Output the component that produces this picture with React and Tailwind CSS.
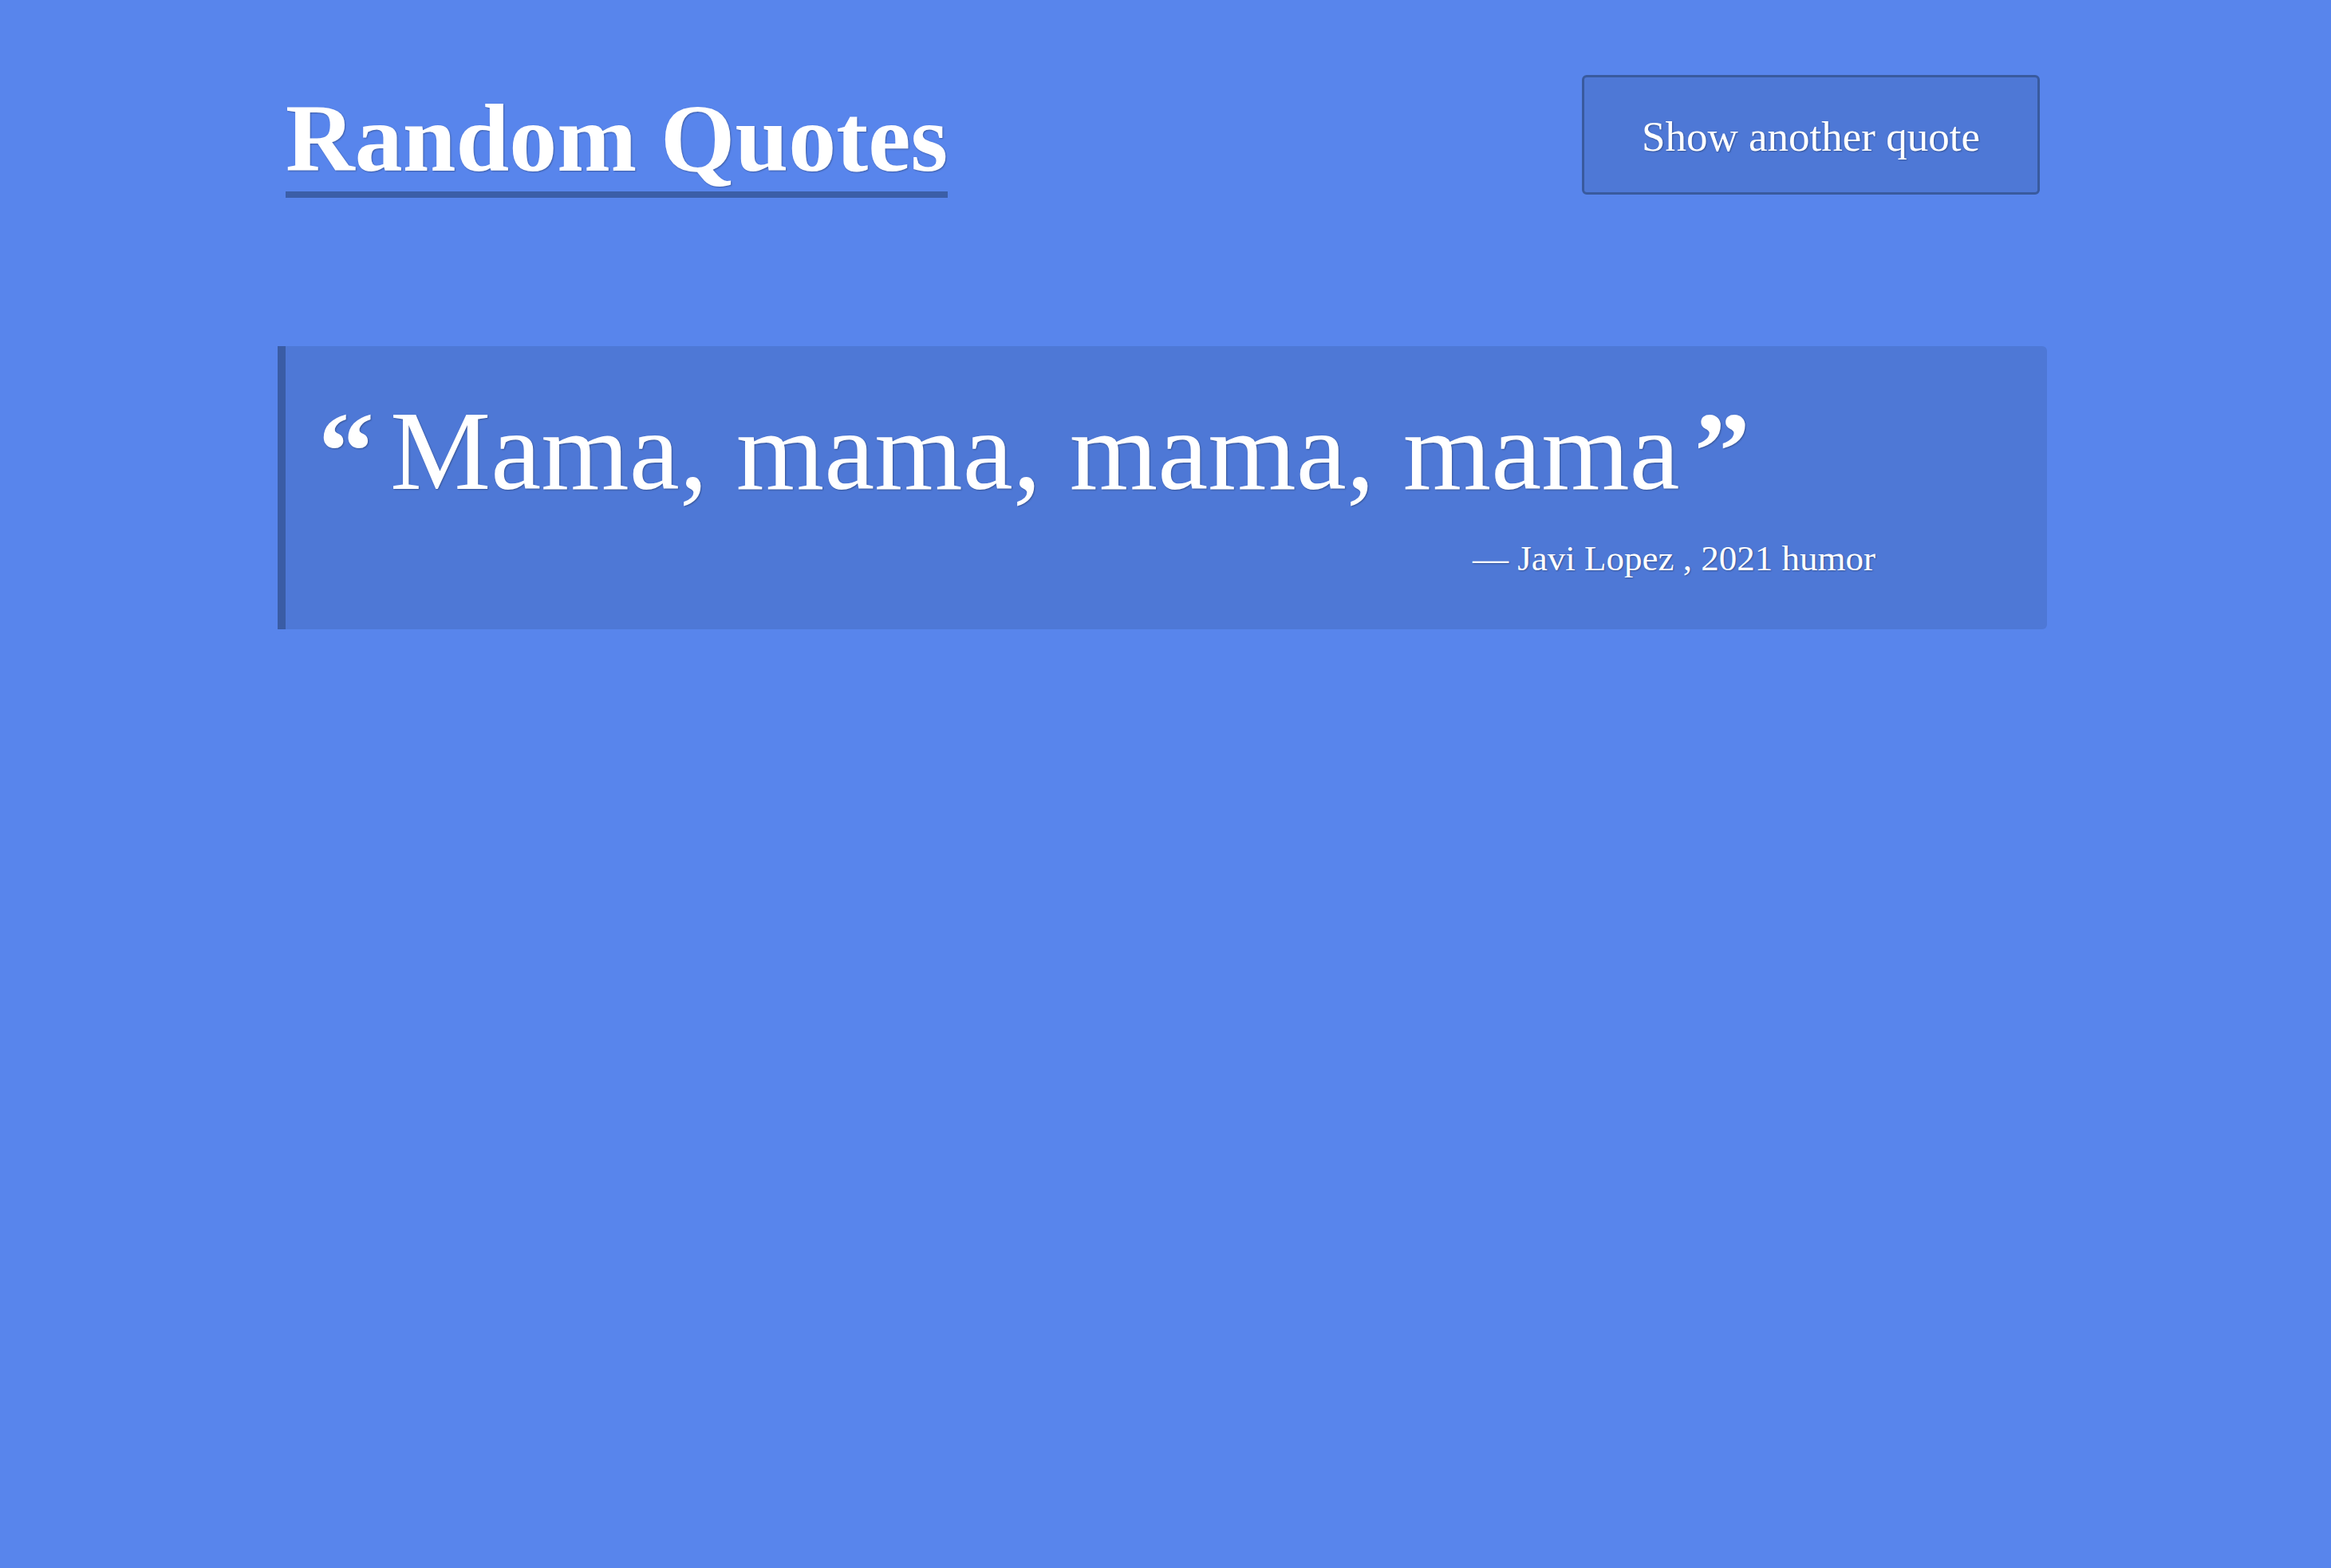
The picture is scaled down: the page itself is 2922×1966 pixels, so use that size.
import React from 'react';

// Cita fija: la captura muestra una sola
const quote = {
  text: 'Mama, mama, mama, mama',
  author: 'Javi Lopez',
  year: '2021',
  tag: 'humor',
};

const shadow = '[text-shadow:1px_1px_2px_rgba(0,0,0,0.3)]';

const App = () => {
  return (
    <main className="min-h-screen bg-[#5885ec] font-['Liberation_Serif',serif] text-white pl-[348px] pr-[356px]">
      {/* Cabecera */}
      <header className="flex items-start justify-between pl-[10px] pr-[9px] pt-[94px]">
        <h1
          className={`mt-[14px] text-[120px] font-bold leading-[1.1] border-b-8 border-[#3b5ea8] ${shadow}`}
        >
          Random Quotes
        </h1>
        <button
          type="button"
          className={`bg-[#4e78d6] border-[3px] border-[#395a9e] rounded-md px-[72px] pt-[43px] pb-[37px] text-[53px] leading-[1.2] text-white ${shadow}`}
        >
          Show another quote
        </button>
      </header>

      {/* Tarjeta con la cita */}
      <section className="mt-[186px] bg-[#4e78d6] border-l-[10px] border-[#3a5ca5] rounded-r-md pt-[46px] pb-[62px] pl-[41px]">
        <p className={`text-[142px] leading-[1.2] ${shadow}`}>
          <span className="font-bold text-[140px] leading-none mr-[20px]">“</span>
          {quote.text}
          <span className="font-bold text-[140px] leading-none ml-[18px]">”</span>
        </p>
        <p className={`mt-[23px] text-right pr-[215px] text-[45px] leading-[1.2] ${shadow}`}>
          — {quote.author} , {quote.year} {quote.tag}
        </p>
      </section>
    </main>
  );
};

export default App;
